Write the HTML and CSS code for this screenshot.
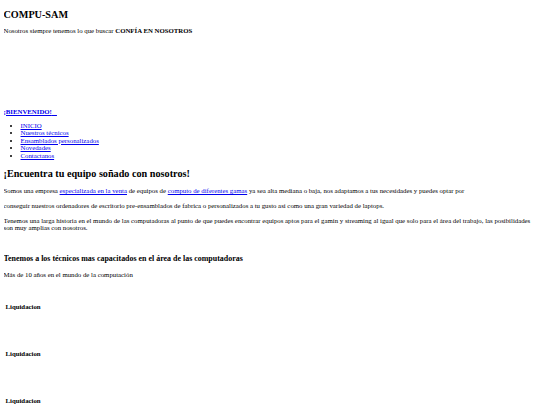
FILE: index.html
```html
<!DOCTYPE html>
<html lang="es">
<head>
<meta charset="utf-8">
<title>COMPU-SAM</title>
<link rel="stylesheet" href="styles.css">
</head>
<body>
<header class="header">
  <h2 class="brand">COMPU-SAM</h2>
  <p class="tagline">Nosotros siempre tenemos lo que buscar <b>CONFÍA EN NOSOTROS</b></p>
  <div class="banner"></div>
</header>
<nav class="nav">
  <a class="welcome" href="#"><b>¡BIENVENIDO!</b> &nbsp;&nbsp;</a>
  <ul class="menu">
    <li><a href="#">INICIO </a></li>
    <li><a href="#">Nuestros técnicos </a></li>
    <li><a href="#">Ensamblados personalizados </a></li>
    <li><a href="#">Novedades </a></li>
    <li><a href="#">Contactanos </a></li>
  </ul>
</nav>
<main class="content">
  <h2 class="title">¡Encuentra tu equipo soñado con nosotros!</h2>
  <p>Somos una empresa <a href="#">especializada en la venta</a> de equipos de <a href="#">computo de diferentes gamas</a> ya sea alta mediana o baja, nos adaptamos a tus necesidades y puedes optar por</p>
  <p>conseguir nuestros ordenadores de escritorio pre-ensamblados de fabrica o personalizados a tu gusto asi como una gran variedad de laptops.</p>
  <p class="history">Tenemos una larga historia en el mundo de las computadoras al punto de que puedes encontrar equipos aptos para el gamin y streaming al igual que solo para el área del trabajo, las posibilidades son muy amplias con nosotros.</p>
  <h3 class="subtitle">Tenemos a los técnicos mas capacitados en el área de las computadoras</h3>
  <p>Más de 10 años en el mundo de la computación</p>
  <section class="offers">
    <div class="offer"><h4 class="offer-title">Liquidacion</h4></div>
    <div class="offer"><h4 class="offer-title">Liquidacion</h4></div>
    <div class="offer"><h4 class="offer-title">Liquidacion</h4></div>
  </section>
</main>
</body>
</html>
```
FILE: styles.css
```css
html {
  background: #fff;
}
body {
  margin: 3.5px;
  font-family: "Liberation Serif", "Times New Roman", serif;
  font-size: 6.8px;
  line-height: 7.6px;
  color: #000;
}
a {
  color: #0000ee;
}
.brand {
  font-size: 1.5em;
  line-height: 1.15;
  margin: 0.5em 0 0.7em;
}
.tagline {
  margin: 1em 0;
}
.banner {
  height: 66px;
}
.welcome {
  display: inline-block;
}
.menu {
  margin: 0.9em 0 1em;
  padding-left: 17px;
}
.title {
  font-size: 1.5em;
  line-height: 1.15;
  margin: 0.83em 0 0.75em;
}
.content p {
  margin: 1em 0;
}
.content .history {
  margin-top: 1.1em;
}
.subtitle {
  font-size: 1.17em;
  line-height: 1.15;
  margin: 22px 0 1.05em;
}
.offer {
  box-sizing: border-box;
  height: 47px;
  padding: 17px 0 0 2px;
}
.offer-title {
  font-size: 1em;
  margin: 0;
}
```
